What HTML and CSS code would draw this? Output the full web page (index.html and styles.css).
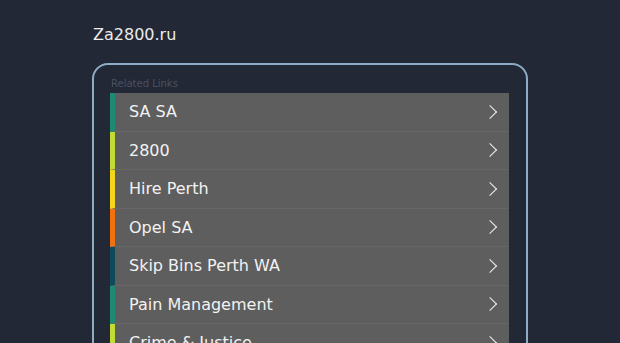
FILE: index.html
```html
<html>
<head>
<title>Za2800.ru</title>
<link rel="stylesheet" href="styles.css">
</head>
<body>

<div class="page">
  <div id="header"><h1>Za2800.ru</h1></div>

  <div class="links-box">
    <div class="links-title">Related Links</div>
    <ul class="links-list">
      <li class="bar-teal"><a href="#">SA SA</a></li>
      <li class="bar-lime"><a href="#">2800</a></li>
      <li class="bar-yellow"><a href="#">Hire Perth</a></li>
      <li class="bar-orange"><a href="#">Opel SA</a></li>
      <li class="bar-petrol"><a href="#">Skip Bins Perth WA</a></li>
      <li class="bar-teal"><a href="#">Pain Management</a></li>
      <li class="bar-lime"><a href="#">Crime &amp; Justice</a></li>
    </ul>
  </div>
</div>

</body>
</html>
```

FILE: styles.css
```css
body {
  margin: 0;
  background: #222835;
  font-family: "DejaVu Sans", Verdana, sans-serif;
  color: #eee;
  overflow: hidden;
}

.page {
  width: 436px;
  margin: 0 auto;
}

#header {
  padding-top: 25px;
  height: 63px;
  box-sizing: border-box;
}

#header h1 {
  margin: 0 0 0 1px;
  font-size: 16px;
  font-weight: normal;
  line-height: 20px;
  color: #ececec;
}

.links-box {
  border: 2px solid #8eacc6;
  border-radius: 16px;
  padding: 11px 17px 40px 16px;
}

.links-title {
  font-size: 10px;
  line-height: 16px;
  color: #4a5262;
  padding-left: 1px;
  margin-bottom: 1px;
}

.links-list {
  list-style: none;
  margin: 0;
  padding: 0;
}

.links-list li {
  height: 38.5px;
  box-sizing: border-box;
  background: #5e5e5e;
  border-left: 5px solid #1f8a72;
  border-bottom: 1px solid #666;
}

.links-list a {
  display: flex;
  align-items: center;
  justify-content: space-between;
  height: 100%;
  padding: 0 11px 0 14px;
  color: #f2f2f2;
  font-size: 16px;
  text-decoration: none;
}

.links-list a::after {
  content: "";
  width: 9px;
  height: 9px;
  border-right: 1.5px solid #f2f2f2;
  border-top: 1.5px solid #f2f2f2;
  transform: rotate(45deg);
  margin-right: 3px;
}

.bar-teal { border-left-color: #1f8a72 !important; }
.bar-lime { border-left-color: #c3dc35 !important; }
.bar-yellow { border-left-color: #f3d61c !important; }
.bar-orange { border-left-color: #f0720f !important; }
.bar-petrol { border-left-color: #0e4a5b !important; }
```
